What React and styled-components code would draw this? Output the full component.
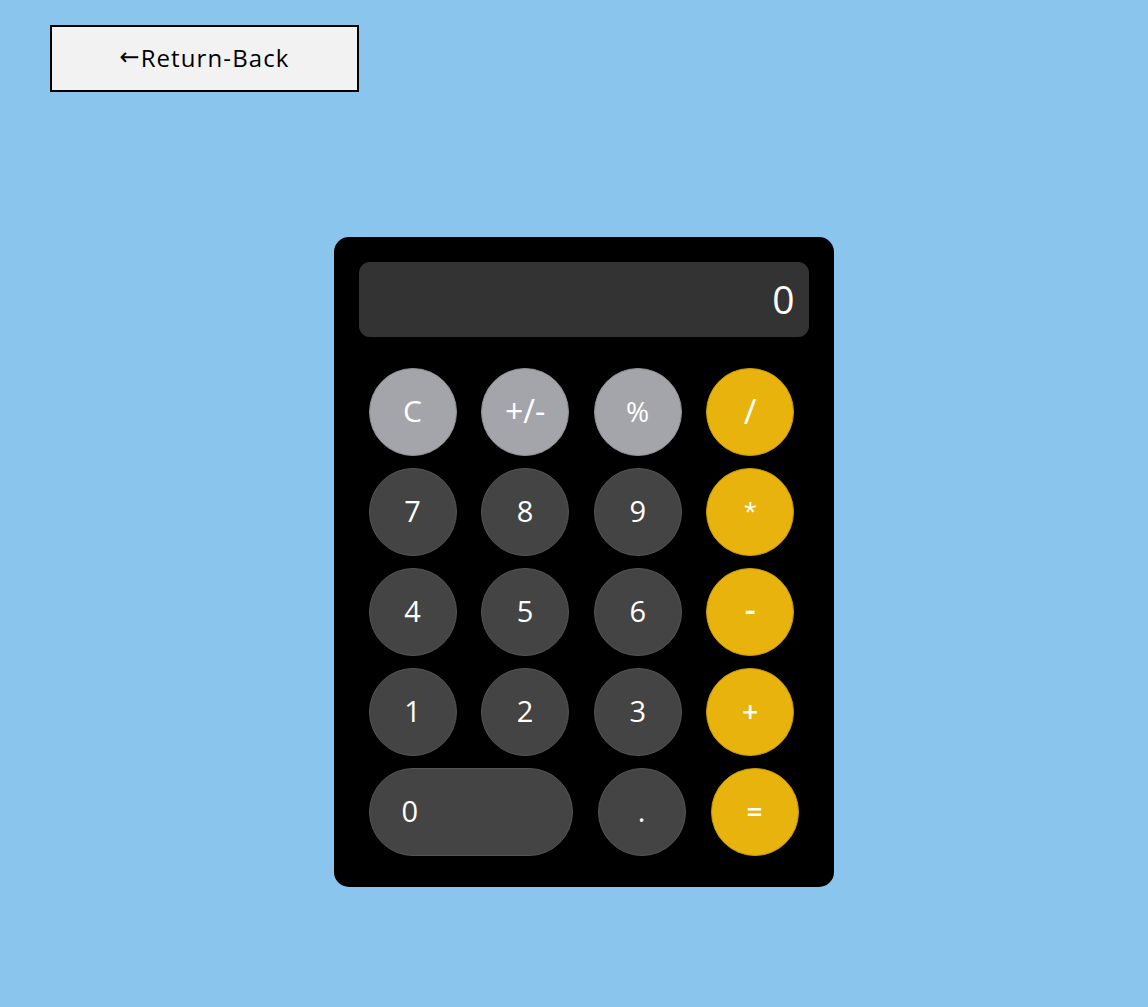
import React from "react";
import styled, { createGlobalStyle } from "styled-components";

const Global = createGlobalStyle`
  html, body { margin: 0; padding: 0; }
  body {
    background: #89c5ec;
    font-family: "Open Sans", "Lato", sans-serif;
    min-height: 1007px;
  }
`;

const Page = styled.div`
  display: flex;
  flex-direction: column;
  padding: 25px 0 0 50px;
`;

const BackButton = styled.button`
  width: 309px;
  height: 67px;
  box-sizing: border-box;
  border: 2px solid #000;
  background: #f2f2f2;
  color: #000;
  font-family: "Open Sans", sans-serif;
  font-size: 24px;
  letter-spacing: 1.1px;
  cursor: pointer;
  display: flex;
  align-items: center;
  justify-content: center;
  padding: 0 0 3px 0;
`;

const Arrow = styled.span`
  font-family: "DejaVu Sans", sans-serif;
  font-size: 24px;
  letter-spacing: 0;
  margin-right: 1px;
`;

const Stage = styled.div`
  display: flex;
  justify-content: center;
  padding: 145px 0 0 0;
  margin-left: -50px;
  padding-left: 19px;
`;

const Calculator = styled.div`
  width: 500px;
  box-sizing: border-box;
  background: #000;
  border-radius: 15px;
  padding: 25px 25px 31px;
  display: flex;
  flex-direction: column;
`;

const Display = styled.div`
  height: 75px;
  box-sizing: border-box;
  background: #333333;
  border-radius: 11px;
  color: #fff;
  font-size: 39px;
  display: flex;
  align-items: center;
  justify-content: flex-end;
  padding: 0 14px 3px 0;
  margin-bottom: 31px;
`;

const Keys = styled.div`
  display: flex;
  flex-direction: column;
  gap: 12px;
  padding-left: 10px;
`;

const Row = styled.div`
  display: flex;
  gap: ${(p) => (p.$last ? "25px" : "24.6px")};
`;

const colors = {
  fn: "#a4a4ab",
  num: "#444444",
  op: "#e8b30c",
};
const borders = {
  fn: "#8e8e95",
  num: "#555555",
  op: "#c89a08",
};

const Key = styled.button`
  width: ${(p) => (p.$wide ? "204px" : "88px")};
  height: 88px;
  box-sizing: border-box;
  border-radius: 44px;
  border: 1px solid ${(p) => borders[p.$kind]};
  background: ${(p) => colors[p.$kind]};
  color: #fff;
  font-family: "Open Sans", sans-serif;
  font-size: ${(p) => p.$size || 29}px;
  font-weight: ${(p) => p.$weight || 400};
  display: flex;
  align-items: center;
  justify-content: ${(p) => (p.$wide ? "flex-start" : "center")};
  padding: 0 0 ${(p) => p.$lift || 3}px ${(p) => (p.$wide ? "32px" : "0")};
  cursor: pointer;
`;

const rows = [
  [
    { l: "C", k: "fn", s: 30 },
    { l: "+/-", k: "fn", s: 32 },
    { l: "%", k: "fn", s: 28 },
    { l: "/", k: "op", s: 35 },
  ],
  [
    { l: "7", k: "num" },
    { l: "8", k: "num" },
    { l: "9", k: "num" },
    { l: "*", k: "op", s: 24 },
  ],
  [
    { l: "4", k: "num" },
    { l: "5", k: "num" },
    { l: "6", k: "num" },
    { l: "-", k: "op", s: 34, w: 600, lift: 7 },
  ],
  [
    { l: "1", k: "num" },
    { l: "2", k: "num" },
    { l: "3", k: "num" },
    { l: "+", k: "op", s: 28, w: 600 },
  ],
];

export default function App() {
  return (
    <>
      <Global />
      <Page>
        <BackButton>
          <Arrow>←</Arrow>Return-Back
        </BackButton>
        <Stage>
          <Calculator>
            <Display>0</Display>
            <Keys>
              {rows.map((r, i) => (
                <Row key={i}>
                  {r.map((b) => (
                    <Key
                      key={b.l}
                      $kind={b.k}
                      $size={b.s}
                      $weight={b.w}
                      $lift={b.lift}
                    >
                      {b.l}
                    </Key>
                  ))}
                </Row>
              ))}
              <Row $last>
                <Key $kind="num" $wide>
                  0
                </Key>
                <Key $kind="num">.</Key>
                <Key $kind="op" $size={28} $weight={600}>
                  =
                </Key>
              </Row>
            </Keys>
          </Calculator>
        </Stage>
      </Page>
    </>
  );
}
